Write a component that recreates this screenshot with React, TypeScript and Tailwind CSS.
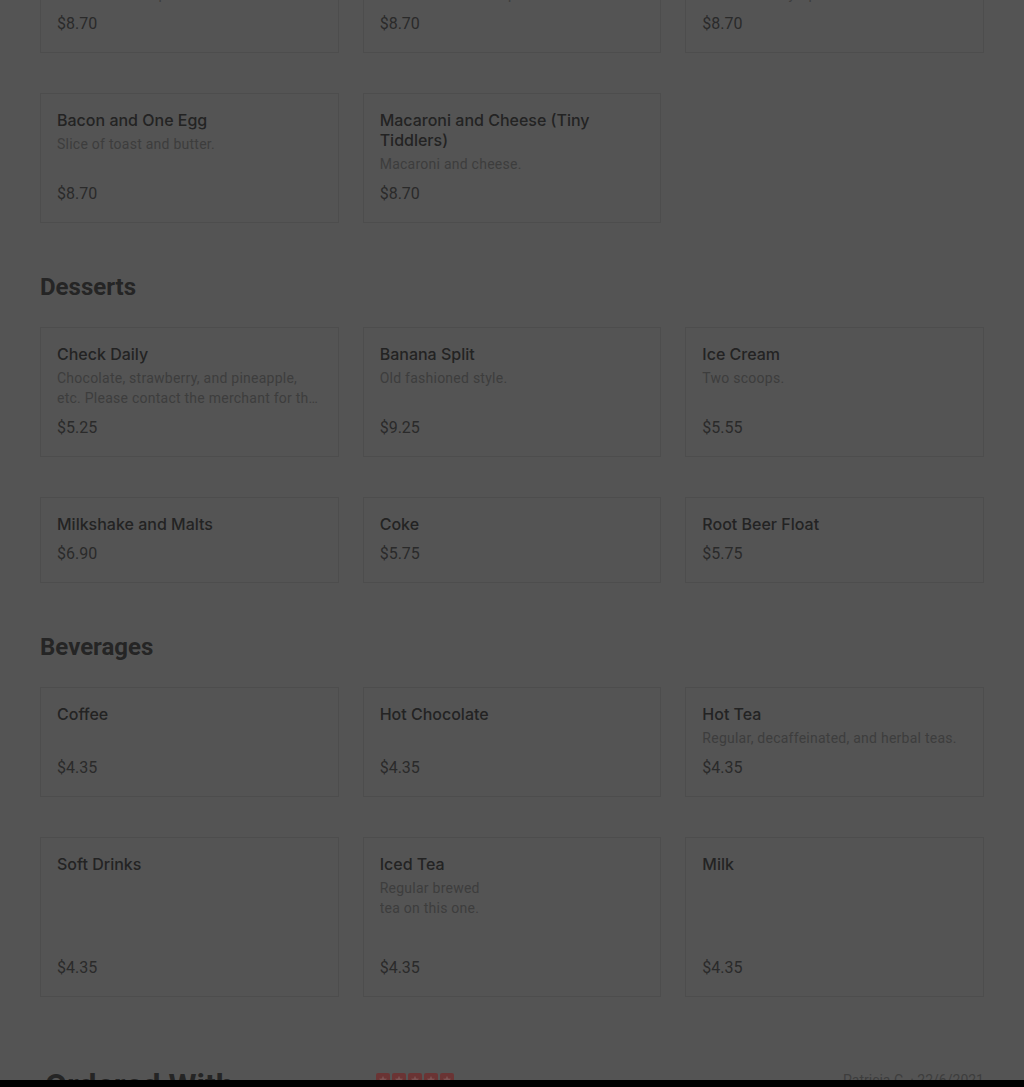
import React from 'react';

type Item = { name: string; desc?: string; price: string; tall?: boolean };

const SECTIONS: { title?: string; items: Item[] }[] = [
    {
        items: [
            { name: 'Grilled Cheese Sandwich', desc: 'With fries or chips.', price: '$8.70' },
            { name: 'Chicken Strips', desc: 'With fries or fruit cup.', price: '$8.70' },
            { name: 'Pancake Short Stack', desc: 'Served with syrup and butter.', price: '$8.70' },
            { name: 'Bacon and One Egg', desc: 'Slice of toast and butter.', price: '$8.70' },
            { name: 'Macaroni and Cheese (Tiny Tiddlers)', desc: 'Macaroni and cheese.', price: '$8.70' },
        ],
    },
    {
        title: 'Desserts',
        items: [
            {
                name: 'Check Daily',
                desc: 'Chocolate, strawberry, and pineapple, etc. Please contact the merchant for the flavor of the day.',
                price: '$5.25',
            },
            { name: 'Banana Split', desc: 'Old fashioned style.', price: '$9.25' },
            { name: 'Ice Cream', desc: 'Two scoops.', price: '$5.55' },
            { name: 'Milkshake and Malts', price: '$6.90' },
            { name: 'Coke', price: '$5.75' },
            { name: 'Root Beer Float', price: '$5.75' },
        ],
    },
    {
        title: 'Beverages',
        items: [
            { name: 'Coffee', price: '$4.35' },
            { name: 'Hot Chocolate', price: '$4.35' },
            { name: 'Hot Tea', desc: 'Regular, decaffeinated, and herbal teas.', price: '$4.35' },
            { name: 'Soft Drinks', price: '$4.35', tall: true },
            { name: 'Iced Tea', desc: 'Regular brewed\ntea on this one.', price: '$4.35', tall: true },
            { name: 'Milk', price: '$4.35', tall: true },
        ],
    },
];

function MenuCard({ item, hasDesc }: { item: Item; hasDesc: boolean }) {
    return (
        <div
            className={
                'flex flex-col border border-[#4d4d4d] p-4 ' +
                (item.tall ? 'min-h-[160px]' : hasDesc ? 'min-h-[110px]' : '')
            }
        >
            <div
                className="text-base leading-5 font-medium text-[#232323]"
                style={{ fontFamily: 'Inter, Roboto, sans-serif' }}
            >
                {item.name}
            </div>
            {item.desc && (
                <div className="mt-1 text-sm leading-5 tracking-[0.25px] text-[#3d3d3d] line-clamp-2 whitespace-pre-line">
                    {item.desc}
                </div>
            )}
            <div className="mt-auto pt-2 text-base leading-6 text-[#2a2a2a]">{item.price}</div>
        </div>
    );
}

function Stars() {
    return (
        <div className="flex gap-[2px]">
            {[0, 1, 2, 3, 4].map(i => (
                <div key={i} className="flex h-[14px] w-[14px] items-center justify-center rounded-[2px] bg-[#6a3434]">
                    <svg viewBox="0 0 24 24" className="h-[10px] w-[10px]" fill="#7a5252">
                        <path d="M12 2l2.9 6.6 7.1.6-5.4 4.7 1.6 7.1L12 17.3 5.8 21l1.6-7.1L2 9.2l7.1-.6z" />
                    </svg>
                </div>
            ))}
        </div>
    );
}

export default function App() {
    return (
        <div
            className="relative h-[1087px] overflow-hidden bg-[#545454]"
            style={{ fontFamily: 'Roboto, "Noto Sans", sans-serif' }}
        >
            {/* page scrolled down: top row is partly off screen */}
            <div className="-mt-[57px] px-10">
                {SECTIONS.map((s, si) => (
                    <section key={si} className={s.title ? 'mt-12' : ''}>
                        {s.title && (
                            <h2 className="mb-6 text-2xl leading-8 font-bold text-[#252525]">{s.title}</h2>
                        )}
                        <div className="grid grid-cols-3 gap-x-6 gap-y-10">
                            {s.items.map(it => (
                                <MenuCard key={it.name} item={it} hasDesc={!!it.desc} />
                            ))}
                        </div>
                    </section>
                ))}

                <div className="mt-[68px] grid grid-cols-3 gap-x-6">
                    <h2 className="pl-[5px] text-[32px] leading-10 font-bold text-[#252525]">Ordered With</h2>
                    <div className="col-span-2 flex items-start justify-between pl-[13px]">
                        <div className="pt-[8px]">
                            <Stars />
                        </div>
                        <div className="pt-[5px] text-sm leading-5 text-[#3d3d3d]">Patricia C. · 22/6/2021</div>
                    </div>
                </div>
            </div>

            <div className="absolute inset-x-0 bottom-0 h-[7px] bg-black" />
        </div>
    );
}
